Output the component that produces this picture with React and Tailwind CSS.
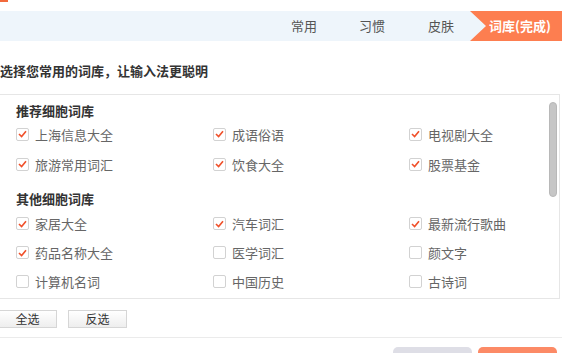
import React from "react";

const recommended = [
  { label: "上海信息大全", checked: true },
  { label: "成语俗语", checked: true },
  { label: "电视剧大全", checked: true },
  { label: "旅游常用词汇", checked: true },
  { label: "饮食大全", checked: true },
  { label: "股票基金", checked: true },
];

const others = [
  { label: "家居大全", checked: true },
  { label: "汽车词汇", checked: true },
  { label: "最新流行歌曲", checked: true },
  { label: "药品名称大全", checked: true },
  { label: "医学词汇", checked: false },
  { label: "颜文字", checked: false },
  { label: "计算机名词", checked: false },
  { label: "中国历史", checked: false },
  { label: "古诗词", checked: false },
];

function Check({ label, checked, tall }) {
  return (
    <div className={"flex items-center " + (tall ? "h-[30px]" : "h-[29px]")}>
      <span className="w-[13px] h-[13px] border border-[#d2d2d2] rounded-[2px] bg-white flex items-center justify-center shrink-0">
        {checked && (
          <svg width="9" height="8" viewBox="0 0 9 8">
            <path d="M1 4 L3.6 6.6 L8 1.2" fill="none" stroke="#f0502a" strokeWidth="1.6" />
          </svg>
        )}
      </span>
      <span className="ml-[6px] text-[13px] text-[#666] leading-none">{label}</span>
    </div>
  );
}

export default function App() {
  return (
    <div className="w-[562px] h-[353px] overflow-hidden bg-white font-['Microsoft_YaHei','Noto_Sans_CJK_SC',sans-serif]">
      <div className="h-[11px]">
        <div className="w-[8px] h-[2px] bg-[#f26a3d]" />
      </div>

      <div className="h-[30px] bg-[#eef5fb] flex items-center justify-end text-[13px] text-[#555]">
        <span className="mr-[42px]">常用</span>
        <span className="mr-[43px]">习惯</span>
        <span className="mr-[16px]">皮肤</span>
        <div className="w-[92px] h-full bg-[#fd7e50] text-white font-bold flex items-center pl-[19px] [clip-path:polygon(0_0,100%_0,100%_100%,0_100%,16px_50%)]">
          词库(完成)
        </div>
      </div>

      <div className="mt-[20px] h-[20px] flex items-center text-[13px] font-bold text-[#333]">
        选择您常用的词库，让输入法更聪明
      </div>

      <div className="mt-[13px] -ml-px w-[561px] h-[205px] border border-[#e6e6e6] relative pl-[16px] pt-[6px]">
        <div className="h-[20px] flex items-center text-[13px] font-bold text-[#333]">推荐细胞词库</div>
        <div className="-mt-[2px] grid grid-cols-[197px_196px_1fr]">
          {recommended.map((it) => (
            <Check key={it.label} {...it} tall />
          ))}
        </div>
        <div className="mt-[10px] h-[20px] flex items-center text-[13px] font-bold text-[#333]">其他细胞词库</div>
        <div className="grid grid-cols-[197px_196px_1fr]">
          {others.map((it) => (
            <Check key={it.label} {...it} />
          ))}
        </div>

        <div className="absolute right-[2px] top-[7px] w-[8px] h-[95px] rounded-[4px] bg-[#c6c6c6] border border-[#b8b8b8]" />
      </div>

      <div className="mt-[11px] flex">
        <button className="-ml-[2px] w-[59px] h-[18px] border border-[#d6d6d6] bg-gradient-to-b from-white to-[#eeeeee] text-[12px] text-[#333] leading-none">
          全选
        </button>
        <button className="ml-[11px] w-[59px] h-[18px] border border-[#d6d6d6] bg-gradient-to-b from-white to-[#eeeeee] text-[12px] text-[#333] leading-none">
          反选
        </button>
      </div>

      <div className="mt-[9px] border-t border-[#ebebeb]" />

      <div className="mt-[9px] flex justify-end pr-[5px] gap-[6px]">
        <div className="w-[79px] h-[24px] rounded-[5px] bg-[#dedee6]" />
        <div className="w-[79px] h-[24px] rounded-[5px] bg-[#fc8a66]" />
      </div>
    </div>
  );
}
